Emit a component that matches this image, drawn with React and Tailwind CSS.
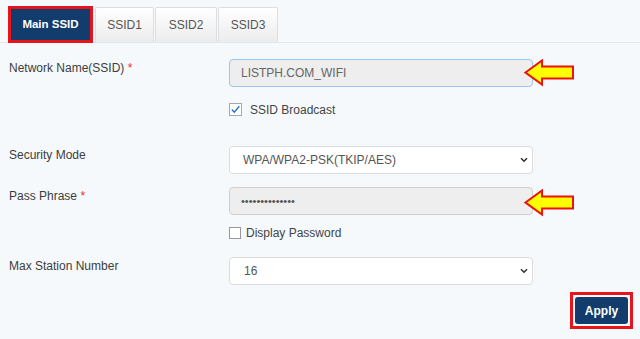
import React from "react";

function Arrow({ className = "" }) {
  return (
    <svg width="52" height="28" viewBox="0 0 52 28" className={className}>
      <polygon
        points="1.5,13.5 18,1.5 18,7.5 49,7.5 49,19.5 18,19.5 18,25.5"
        fill="#ffff00"
        stroke="#ee1111"
        strokeWidth="2"
        strokeLinejoin="miter"
      />
    </svg>
  );
}

function Chevron() {
  return (
    <svg width="8" height="6" viewBox="0 0 8 6" className="absolute right-[5px] top-[11px] pointer-events-none">
      <path d="M1 1.2 L4 4.2 L7 1.2" fill="none" stroke="#333" strokeWidth="1.6" />
    </svg>
  );
}

function Label({ children, required }) {
  return (
    <div className="w-[220px] shrink-0 mt-[1px] leading-[16px] text-[#3d3d3d]">
      {children}
      {required && <span className="text-[#e0303a]"> *</span>}
    </div>
  );
}

const tabs = ["SSID1", "SSID2", "SSID3"];

export default function App() {
  return (
    <div className="w-[640px] h-[339px] overflow-hidden bg-[#f5f9fc] font-['Liberation_Sans',Arial,sans-serif] text-[12px]">
      <div className="flex items-end h-[43px] pl-[8px] pt-[6px] border-b border-[#e3e7eb]">
        <div className="w-[85px] h-[37px] -mb-[1px] border-[3px] border-[#e8141b] bg-[#113c6c] text-white font-bold text-[11.5px] flex items-center justify-center">
          Main SSID
        </div>
        {tabs.map((t, i) => (
          <div
            key={t}
            className={`h-[35px] border border-b-0 border-[#dcdfe2] rounded-t-[2px] bg-gradient-to-b from-white to-[#ececec] text-[#555] flex items-center justify-center ${
              i === 0 ? "ml-[2px] w-[59px]" : i === 1 ? "ml-[1px] w-[62px]" : "ml-[1px] w-[60px]"
            }`}
          >
            {t}
          </div>
        ))}
      </div>

      <div className="flex flex-col pl-[9px] pt-[16px]">
        <div className="flex">
          <Label required>Network Name(SSID)</Label>
          <div className="relative">
            <input
              readOnly
              value="LISTPH.COM_WIFI"
              className="w-[304px] h-[28px] rounded-[4px] border border-[#9cc6ec] bg-[#eeeeee] pl-[11px] text-[12px] text-[#666] outline-none"
            />
            <Arrow className="absolute left-[295px] top-[0px]" />
          </div>
        </div>

        <div className="flex items-center mt-[16px] pl-[220px] h-[13px]">
          <div className="w-[13px] h-[13px] border border-[#a8a8a8] bg-white flex items-center justify-center">
            <svg width="11" height="11" viewBox="0 0 11 11">
              <path d="M1.8 5.6 L4.3 8.3 L9.3 2.2" fill="none" stroke="#2a6fd6" strokeWidth="1.4" />
            </svg>
          </div>
          <span className="ml-[8px] text-[#444]">SSID Broadcast</span>
        </div>

        <div className="flex mt-[30px]">
          <Label>Security Mode</Label>
          <div className="relative">
            <select
              defaultValue="wpa"
              className="appearance-none w-[304px] h-[28px] rounded-[4px] border border-[#dcdcdc] bg-white pl-[13px] text-[12px] text-[#555] outline-none"
            >
              <option value="wpa">WPA/WPA2-PSK(TKIP/AES)</option>
            </select>
            <Chevron />
          </div>
        </div>

        <div className="flex mt-[13px]">
          <Label required>Pass Phrase</Label>
          <div className="relative">
            <input
              readOnly
              type="password"
              value="listphpassword"
              className="w-[304px] h-[28px] rounded-[4px] border border-[#cfcfcf] bg-[#eeeeee] pl-[11px] text-[11px] text-[#555] outline-none"
            />
            <Arrow className="absolute left-[295px] top-[2px]" />
          </div>
        </div>

        <div className="flex items-center mt-[12px] pl-[220px] h-[12px]">
          <div className="w-[12px] h-[12px] border border-[#999] bg-white" />
          <span className="ml-[5px] text-[#444]">Display Password</span>
        </div>

        <div className="flex mt-[18px]">
          <Label>Max Station Number</Label>
          <div className="relative">
            <select
              defaultValue="16"
              className="appearance-none w-[304px] h-[28px] rounded-[4px] border border-[#dcdcdc] bg-white pl-[14px] text-[12px] text-[#555] outline-none"
            >
              <option value="16">16</option>
            </select>
            <Chevron />
          </div>
        </div>

        <div className="flex justify-end pr-[7px] mt-[7px]">
          <div className="w-[63px] h-[37px] border-[3px] border-[#e8141b] p-[2px]">
            <button className="w-full h-full rounded-[3px] bg-[#113c6c] text-white font-bold text-[12px]">
              Apply
            </button>
          </div>
        </div>
      </div>
    </div>
  );
}
